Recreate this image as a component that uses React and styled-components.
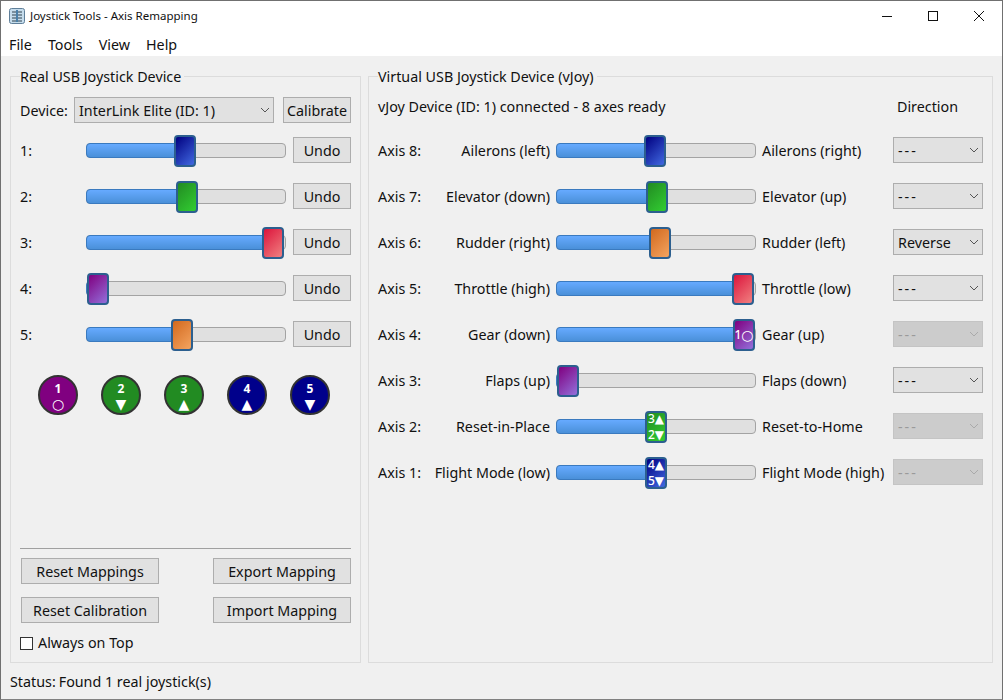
import styled, { createGlobalStyle } from "styled-components";

const GlobalStyle = createGlobalStyle`
	html, body {
		margin: 0;
		padding: 0;
		background: #f0f0f0;
	}
	* {
		box-sizing: border-box;
	}
`;

const Window = styled.div`
	width: 1003px;
	height: 700px;
	display: flex;
	flex-direction: column;
	overflow: hidden;
	background: #f0f0f0;
	border: 1px solid #707070;
	border-bottom-color: #808080;
	font-family: "Noto Sans", "Open Sans", sans-serif;
	font-size: 14.3px;
	color: #111;
`;

const TitleBar = styled.div`
	height: 29px;
	flex: none;
	display: flex;
	align-items: center;
	padding-left: 8px;
	background: white;
	font-size: 11.5px;
`;

const Title = styled.span`
	flex: 1;
	margin-left: 5px;
`;

const WinButton = styled.div`
	width: 46px;
	height: 29px;
	display: flex;
	align-items: center;
	justify-content: center;
`;

const MenuBar = styled.div`
	height: 26px;
	flex: none;
	display: flex;
	align-items: center;
	padding: 2px 0 0 8px;
	background: white;
`;

const MenuItem = styled.span`
	margin-right: 16px;
`;

const Main = styled.div`
	flex: none;
	display: flex;
	gap: 7px;
	padding: 12px 9px 0;
`;

const Group = styled.fieldset`
	margin: 0;
	padding: 0 9px 0 9px;
	width: ${(p) => p.$width}px;
	height: 595px;
	flex: none;
	border: 1px solid #dcdcdc;
	display: flex;
	flex-direction: column;
`;

const Legend = styled.legend`
	padding: 0 3px 0 0;
	line-height: 17px;
`;

const Row = styled.div`
	height: 26px;
	flex: none;
	display: flex;
	align-items: center;
	margin-top: ${(p) => p.$top ?? 20}px;
`;

const RowLabel = styled.span`
	width: ${(p) => p.$width}px;
	flex: none;
`;

const Button = styled.div`
	width: ${(p) => p.$width}px;
	height: 26px;
	flex: none;
	display: flex;
	align-items: center;
	justify-content: center;
	margin-left: ${(p) => p.$left ?? 0}px;
	background: #e1e1e1;
	border: 1px solid #adadad;
	white-space: nowrap;
`;

const Combo = styled.div`
	width: ${(p) => p.$width}px;
	height: 26px;
	flex: none;
	display: flex;
	align-items: center;
	justify-content: space-between;
	padding: 0 3px 0 4px;
	margin-left: ${(p) => p.$left ?? 0}px;
	background: ${(p) => (p.$disabled ? "#cccccc" : "#e1e1e1")};
	border: 1px solid ${(p) => (p.$disabled ? "#c4c4c4" : "#adadad")};
	color: ${(p) => (p.$disabled ? "#9a9a9a" : "#111")};
	white-space: nowrap;
`;

const Dashes = styled.span`
	letter-spacing: 2px;
`;

const Track = styled.div`
	position: relative;
	width: 200px;
	height: 15px;
	flex: none;
	background: #e0e0e0;
	border: 1px solid #a3a3a3;
	border-radius: 4px;
`;

const Fill = styled.div`
	position: absolute;
	left: -1px;
	top: -1px;
	bottom: -1px;
	background: linear-gradient(#66aaff, #4a90d9);
	border: 1px solid #3a7abf;
	border-radius: 4px 0 0 4px;
`;

const handleColors = {
	blue: "#000080, #4169e1",
	green: "#228b22, #32cd32",
	red: "#dc143c, #f08080",
	purple: "#800080, #9370db",
	orange: "#d2691e, #f4a460",
};

const Handle = styled.div`
	position: absolute;
	top: -9px;
	width: 22px;
	height: 32px;
	display: flex;
	flex-direction: column;
	align-items: center;
	justify-content: ${(p) => (p.$split ? "space-between" : "center")};
	background: linear-gradient(135deg, ${(p) => handleColors[p.$color]});
	border: 2px solid #2c5f8f;
	border-radius: 4px;
	color: white;
	font-size: 12px;
	font-weight: 500;
`;

const Mark = styled.div`
	height: 12px;
	display: flex;
	align-items: center;
	line-height: 12px;
	white-space: nowrap;
`;

const Glyph = styled.span`
	font-family: "DejaVu Sans", sans-serif;
	font-size: ${(p) => p.$size ?? 12}px;
	line-height: 12px;
`;

const Circles = styled.div`
	display: flex;
	gap: 23px;
	margin: 28px 0 0 18px;
`;

const Circle = styled.div`
	width: 40px;
	height: 40px;
	display: flex;
	flex-direction: column;
	align-items: center;
	justify-content: center;
	background: ${(p) => p.$color};
	border: 2px solid #333;
	border-radius: 50%;
	color: white;
	font-size: 12px;
	font-weight: 700;
	line-height: 18px;
`;

const Spacer = styled.div`
	flex: 1;
`;

const Divider = styled.div`
	height: 1px;
	background: #a0a0a0;
	flex: none;
`;

const ButtonRow = styled.div`
	display: flex;
	justify-content: space-between;
	padding-left: 1px;
	margin-top: ${(p) => p.$top}px;
`;

const CheckRow = styled.div`
	display: flex;
	align-items: center;
	gap: 5px;
	margin: 12px 0 11px;
	line-height: 16px;
`;

const CheckBox = styled.span`
	width: 13px;
	height: 13px;
	background: white;
	border: 1px solid #333;
`;

const AxisLabel = styled.span`
	width: ${(p) => p.$width}px;
	flex: none;
	white-space: nowrap;
	text-align: ${(p) => p.$align ?? "left"};
	margin: 0 ${(p) => p.$right ?? 0}px 0 ${(p) => p.$left ?? 0}px;
`;

const InfoRow = styled.div`
	height: 26px;
	flex: none;
	display: flex;
	align-items: center;
	justify-content: space-between;
	margin-top: 8px;
	padding-right: 25px;
`;

const StatusBar = styled.div`
	flex: 1;
	display: flex;
	align-items: center;
	gap: 3px;
	padding-left: 9px;
`;

const AppIcon = () => (
	<svg width="16" height="16" viewBox="0 0 16 16">
		<rect x="0.5" y="0.5" width="15" height="15" rx="2" fill="#c5dcec" stroke="#5f7f99" />
		<path d="M3 4h10M3 7h10M3 10h10M3 13h10" stroke="#31424f" />
		<path d="M8 2v12" stroke="#4a7fa8" strokeWidth="2" />
	</svg>
);

const Chevron = ({ color = "#555" }) => (
	<svg width="10" height="6" viewBox="0 0 10 6">
		<path d="M1 1l4 4 4-4" fill="none" stroke={color} />
	</svg>
);

const Slider = ({ pos, color, children, split }) => (
	<Track>
		<Fill style={{ width: pos + 12 }} />
		<Handle $color={color} $split={split} style={{ left: pos - 1 }}>
			{children}
		</Handle>
	</Track>
);

const realAxes = [
	["1:", 88, "blue"],
	["2:", 90, "green"],
	["3:", 176, "red"],
	["4:", 1, "purple"],
	["5:", 85, "orange"],
];

const circles = [
	["1", "○", "#800080"],
	["2", "▼", "#228b22"],
	["3", "▲", "#228b22"],
	["4", "▲", "#00008b"],
	["5", "▼", "#00008b"],
];

const virtualAxes = [
	{ name: "Axis 8:", low: "Ailerons (left)", high: "Ailerons (right)", pos: 88, color: "blue", dir: "---" },
	{ name: "Axis 7:", low: "Elevator (down)", high: "Elevator (up)", pos: 90, color: "green", dir: "---" },
	{ name: "Axis 6:", low: "Rudder (right)", high: "Rudder (left)", pos: 93, color: "orange", dir: "Reverse" },
	{ name: "Axis 5:", low: "Throttle (high)", high: "Throttle (low)", pos: 176, color: "red", dir: "---" },
	{ name: "Axis 4:", low: "Gear (down)", high: "Gear (up)", pos: 177, color: "purple", dir: "---", disabled: true, marks: [["1", "○"]] },
	{ name: "Axis 3:", low: "Flaps (up)", high: "Flaps (down)", pos: 1, color: "purple", dir: "---" },
	{ name: "Axis 2:", low: "Reset-in-Place", high: "Reset-to-Home", pos: 89, color: "green", dir: "---", disabled: true, marks: [["3", "▲"], ["2", "▼"]] },
	{ name: "Axis 1:", low: "Flight Mode (low)", high: "Flight Mode (high)", pos: 89, color: "blue", dir: "---", disabled: true, marks: [["4", "▲"], ["5", "▼"]] },
];

const App = () => {
	return (
		<Window>
			<GlobalStyle />
			<TitleBar>
				<AppIcon />
				<Title>Joystick Tools - Axis Remapping</Title>
				<WinButton>
					<svg width="10" height="10" viewBox="0 0 10 10">
						<path d="M0 5.5h10" stroke="#111" />
					</svg>
				</WinButton>
				<WinButton>
					<svg width="10" height="10" viewBox="0 0 10 10">
						<rect x="0.5" y="0.5" width="9" height="9" fill="none" stroke="#111" />
					</svg>
				</WinButton>
				<WinButton>
					<svg width="10" height="10" viewBox="0 0 10 10">
						<path d="M0 0l10 10M10 0L0 10" stroke="#111" />
					</svg>
				</WinButton>
			</TitleBar>
			<MenuBar>
				<MenuItem>File</MenuItem>
				<MenuItem>Tools</MenuItem>
				<MenuItem>View</MenuItem>
				<MenuItem>Help</MenuItem>
			</MenuBar>
			<Main>
				<Group $width={351}>
					<Legend>Real USB Joystick Device</Legend>
					<Row $top={12}>
						<RowLabel $width={54}>Device:</RowLabel>
						<Combo $width={200}>
							InterLink Elite (ID: 1)
							<Chevron />
						</Combo>
						<Button $width={68} $left={9}>Calibrate</Button>
					</Row>
					{realAxes.map(([label, pos, color], i) => (
						<Row key={label} $top={i === 0 ? 14 : 20}>
							<RowLabel $width={66}>{label}</RowLabel>
							<Slider pos={pos} color={color} />
							<Button $width={58} $left={7}>Undo</Button>
						</Row>
					))}
					<Circles>
						{circles.map(([num, glyph, color]) => (
							<Circle key={num} $color={color}>
								{num}
								<Glyph $size={14}>{glyph}</Glyph>
							</Circle>
						))}
					</Circles>
					<Spacer />
					<Divider />
					<ButtonRow $top={9}>
						<Button $width={138}>Reset Mappings</Button>
						<Button $width={138}>Export Mapping</Button>
					</ButtonRow>
					<ButtonRow $top={13}>
						<Button $width={138}>Reset Calibration</Button>
						<Button $width={138}>Import Mapping</Button>
					</ButtonRow>
					<CheckRow>
						<CheckBox />
						Always on Top
					</CheckRow>
				</Group>
				<Group $width={625}>
					<Legend>Virtual USB Joystick Device (vJoy)</Legend>
					<InfoRow>
						vJoy Device (ID: 1) connected - 8 axes ready
						<span>Direction</span>
					</InfoRow>
					{virtualAxes.map((a, i) => (
						<Row key={a.name} $top={i === 0 ? 18 : 20}>
							<AxisLabel $width={50}>{a.name}</AxisLabel>
							<AxisLabel $width={122} $align="right" $right={6}>{a.low}</AxisLabel>
							<Slider pos={a.pos} color={a.color} split={a.marks?.length > 1}>
								{a.marks?.map(([num, glyph]) => (
									<Mark key={num}>
										{num}
										<Glyph $size={glyph === "○" ? 14 : 12}>{glyph}</Glyph>
									</Mark>
								))}
							</Slider>
							<AxisLabel $width={131} $left={6}>{a.high}</AxisLabel>
							<Combo $width={90} $disabled={a.disabled}>
								{a.dir === "---" ? <Dashes>---</Dashes> : a.dir}
								<Chevron color={a.disabled ? "#aaa" : "#555"} />
							</Combo>
						</Row>
					))}
				</Group>
			</Main>
			<StatusBar>
				<span>Status:</span>
				<span>Found 1 real joystick(s)</span>
			</StatusBar>
		</Window>
	);
};

export default App;
